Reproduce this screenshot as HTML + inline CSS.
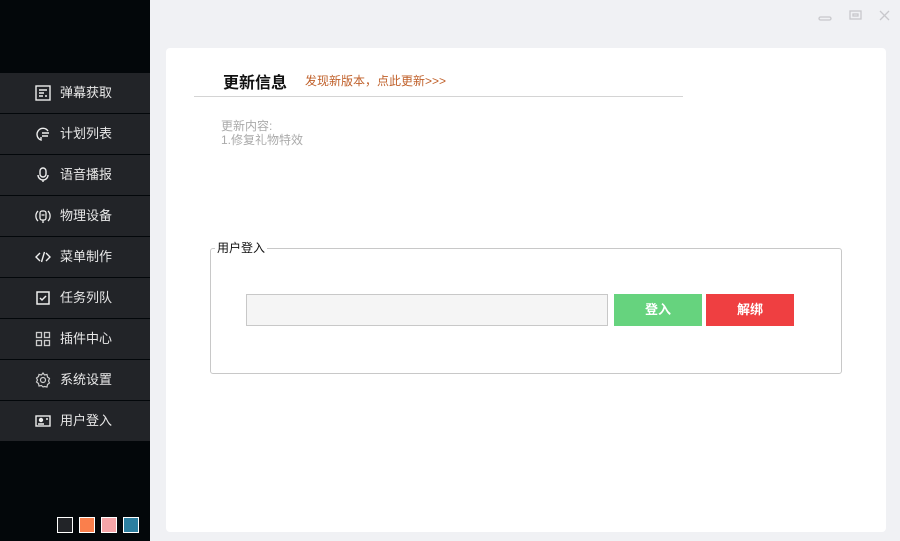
<!DOCTYPE html>
<html><head><meta charset="utf-8"><style>
*{margin:0;padding:0;box-sizing:border-box}
body{width:900px;height:541px;background:#f0f1f4;font-family:"Liberation Sans","Noto Sans CJK SC",sans-serif;position:relative;overflow:hidden}
.side{position:absolute;left:0;top:0;width:150px;height:541px;background:#03070a}
.item{position:absolute;left:0;width:150px;height:40px;background:#222428;color:#e8e8e8;font-size:13px}
.item span{position:absolute;left:60px;top:11px;line-height:18px}
.item svg{position:absolute;left:35px;top:12px}
.sw{position:absolute;top:517px;width:16px;height:16px;border:1px solid #fff}
.panel{position:absolute;left:166px;top:48px;width:720px;height:484px;background:#fff;border-radius:4px}
</style></head><body>
<div class="side">
<div class="item" style="top:73px"><svg width="16" height="16" viewBox="0 0 16 16" fill="none" stroke="#eee" stroke-width="1.4"><rect x="1" y="1" width="14" height="14"/><path d="M4 5h8M4 8h5M10 11h2M4 11h4"/></svg><span>弹幕获取</span></div>
<div class="item" style="top:114px"><svg width="16" height="16" viewBox="0 0 16 16" fill="none" stroke="#eee" stroke-width="1.4"><path d="M13 5A6 6 0 1 0 6 14V11"/><path d="M7 7h7M7 10h6"/></svg><span>计划列表</span></div>
<div class="item" style="top:155px"><svg width="16" height="16" viewBox="0 0 16 16" fill="none" stroke="#eee" stroke-width="1.4"><rect x="5" y="1" width="6" height="9" rx="3"/><path d="M3 8a5 5 0 0 0 10 0M8 13v2"/></svg><span>语音播报</span></div>
<div class="item" style="top:196px"><svg width="16" height="16" viewBox="0 0 16 16" fill="none" stroke="#eee" stroke-width="1.3"><path d="M3 3A7 7 0 0 0 3 13M13 3a7 7 0 0 1 0 10"/><rect x="5" y="3" width="6" height="9" rx="2"/><path d="M8 12v3M6.5 7h3"/></svg><span>物理设备</span></div>
<div class="item" style="top:237px"><svg width="16" height="16" viewBox="0 0 16 16" fill="none" stroke="#eee" stroke-width="1.4"><path d="M5 4 1 8l4 4M11 4l4 4-4 4M9.5 3l-3 10"/></svg><span>菜单制作</span></div>
<div class="item" style="top:278px"><svg width="16" height="16" viewBox="0 0 16 16" fill="none" stroke="#eee" stroke-width="1.5"><rect x="2" y="2" width="12" height="12"/><path d="M5 8l2 2 4-4"/></svg><span>任务列队</span></div>
<div class="item" style="top:319px"><svg width="16" height="16" viewBox="0 0 16 16" fill="none" stroke="#ccc" stroke-width="1.3"><rect x="1.5" y="1.5" width="5" height="5"/><rect x="9.5" y="1.5" width="5" height="5"/><rect x="1.5" y="9.5" width="5" height="5"/><rect x="9.5" y="9.5" width="5" height="5"/></svg><span>插件中心</span></div>
<div class="item" style="top:360px"><svg width="16" height="16" viewBox="0 0 16 16" fill="none" stroke="#ccc" stroke-width="1.2"><path d="M8 1l1.5 2 2.5-.5.5 2.5 2 1.5-1 2.5 1 2-2 1.5-.5 2.5-2.5-.5L8 15l-1.5-1.5-2.5.5L3.5 11.5 1.5 10l1-2-1-2 2-1.5L4 2.5 6.5 3z"/><circle cx="8" cy="8" r="2.5"/></svg><span>系统设置</span></div>
<div class="item" style="top:401px"><svg width="16" height="16" viewBox="0 0 16 16" fill="none" stroke="#eee" stroke-width="1.4"><rect x="1" y="3" width="14" height="10"/><circle cx="6" cy="7" r="1.5" fill="#eee"/><path d="M3 11h6M11 6h2" /></svg><span>用户登入</span></div>
<div class="sw" style="left:57px;background:#222428"></div>
<div class="sw" style="left:79px;background:#fa7f4c"></div>
<div class="sw" style="left:101px;background:#f6a5a8"></div>
<div class="sw" style="left:123px;background:#2d7fa0"></div>
</div>
<svg style="position:absolute;left:815px;top:8px" width="80" height="16" fill="none" stroke="#c8c8cc" stroke-width="1.3"><rect x="4" y="9" width="12" height="3" rx="1.5"/><rect x="35" y="3" width="11" height="8"/><rect x="38" y="6" width="5" height="2"/><path d="M65 3l9 9M74 3l-9 9"/></svg>
<div class="panel">
<div style="position:absolute;left:57px;top:21px;font-size:16px;font-weight:bold;color:#111">更新信息</div>
<div style="position:absolute;left:139px;top:24px;font-size:12px;color:#c0602a">发现新版本，点此更新&gt;&gt;&gt;</div>
<div style="position:absolute;left:28px;top:48px;width:489px;height:1px;background:#d4d4d4"></div>
<div style="position:absolute;left:55px;top:71px;font-size:12px;color:#aaa;line-height:14px">更新内容:<br>1.修复礼物特效</div>
<div style="position:absolute;left:44px;top:200px;width:632px;height:126px;border:1px solid #c8c8c8;border-radius:3px"></div>
<div style="position:absolute;left:49px;top:191px;font-size:12px;color:#111;background:#fff;padding:0 2px">用户登入</div>
<div style="position:absolute;left:80px;top:246px;width:362px;height:32px;border:1px solid #c8c8c8;background:#f5f5f5"></div>
<div style="position:absolute;left:448px;top:246px;width:88px;height:32px;background:#66d37e;color:#fff;font-size:13px;font-weight:bold;text-align:center;line-height:32px">登入</div>
<div style="position:absolute;left:540px;top:246px;width:88px;height:32px;background:#ef3f41;color:#fff;font-size:13px;font-weight:bold;text-align:center;line-height:32px">解绑</div>
</div>
</body></html>
